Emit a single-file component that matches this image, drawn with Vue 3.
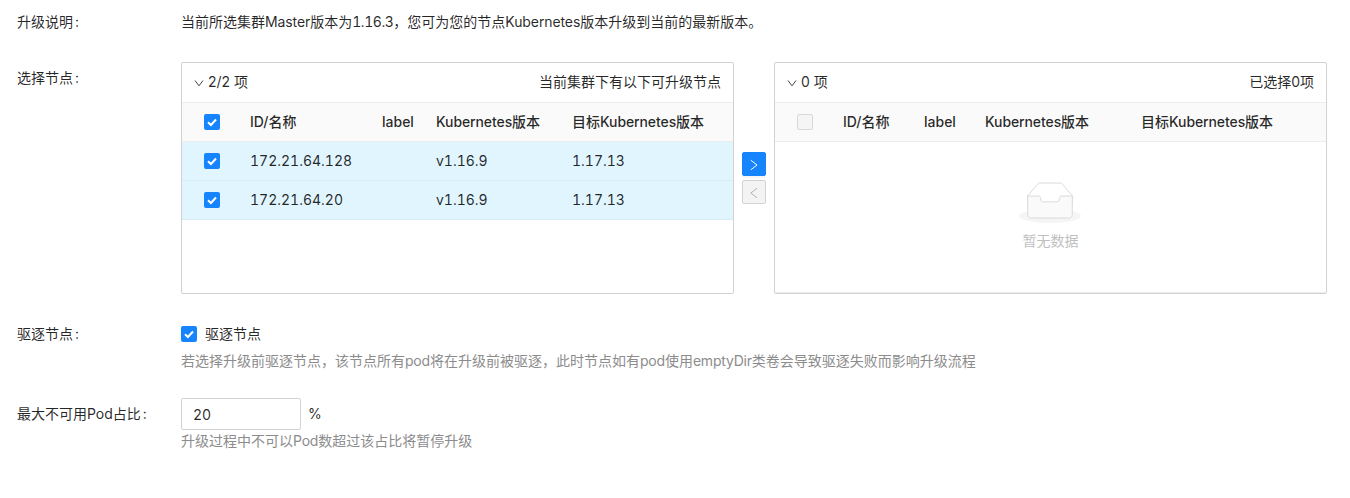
<script setup>
import { ref } from 'vue'

const columns = [
  { pre: 'ID/名称', latin: '', post: '' },
  { pre: 'label', latin: '', post: '' },
  { pre: '', latin: 'Kubernetes', post: '版本' },
  { pre: '目标', latin: 'Kubernetes', post: '版本' },
]
const nodes = [
  { id: '172.21.64.128', version: 'v1.16.9', target: '1.17.13' },
  { id: '172.21.64.20', version: 'v1.16.9', target: '1.17.13' },
]
const percent = ref('20')
</script>

<template>
  <main class="form">
    <section class="row intro">
      <div class="label">升级说明<i>:</i></div>
      <div class="desc">当前所选集群<span class="latin">Master</span>版本为<span class="num">1.16.3</span>，您可为您的节点<span class="latin">Kubernetes</span>版本升级到当前的最新版本。</div>
    </section>

    <section class="row pick">
      <div class="label">选择节点<i>:</i></div>
      <div class="transfer">
        <div class="panel">
          <header>
            <svg class="chev" viewBox="0 0 10 10"><path d="M1 2.5 5 7.8 9 2.5" /></svg>
            <span class="count">2/2 项</span>
            <span class="title">当前集群下有以下可升级节点</span>
          </header>
          <div class="line left head">
            <span class="cell center"><span class="box on"><svg viewBox="0 0 16 16"><path d="M4 8.2 6.9 11 12 5.5" /></svg></span></span>
            <span v-for="(c, i) in columns" :key="i" class="cell">{{ c.pre }}<span class="latin">{{ c.latin }}</span>{{ c.post }}</span>
          </div>
          <div v-for="n in nodes" :key="n.id" class="line left data">
            <span class="cell center"><span class="box on"><svg viewBox="0 0 16 16"><path d="M4 8.2 6.9 11 12 5.5" /></svg></span></span>
            <span class="cell">{{ n.id }}</span>
            <span class="cell"></span>
            <span class="cell">{{ n.version }}</span>
            <span class="cell">{{ n.target }}</span>
          </div>
        </div>

        <div class="ops">
          <button class="op primary"><svg viewBox="0 0 12 12"><path d="M2.8 1.2 9 6 2.8 10.8" /></svg></button>
          <button class="op" disabled><svg viewBox="0 0 12 12"><path d="M9 1.2 2.8 6 9 10.8" /></svg></button>
        </div>

        <div class="panel">
          <header>
            <svg class="chev" viewBox="0 0 10 10"><path d="M1 2.5 5 7.8 9 2.5" /></svg>
            <span class="count">0 项</span>
            <span class="title">已选择0项</span>
          </header>
          <div class="line right head">
            <span class="cell center"><span class="box off"></span></span>
            <span v-for="(c, i) in columns" :key="i" class="cell">{{ c.pre }}<span class="latin">{{ c.latin }}</span>{{ c.post }}</span>
          </div>
          <div class="empty">
            <svg width="62" height="41" viewBox="0 0 64 41" preserveAspectRatio="none">
              <g transform="translate(0 1)" fill="none" fill-rule="evenodd">
                <ellipse fill="#f5f5f5" cx="32" cy="33" rx="32" ry="7" />
                <g fill-rule="nonzero" stroke="#d9d9d9">
                  <path d="M55 12.76L44.854 1.258C44.367.474 43.656 0 42.907 0H21.093c-.749 0-1.46.474-1.947 1.257L9 12.761V22h46v-9.24z" />
                  <path d="M41.613 15.931c0-1.605.994-2.93 2.227-2.931H55v18.137C55 33.26 53.68 35 52.05 35h-40.1C10.32 35 9 33.259 9 31.137V13h11.16c1.233 0 2.227 1.323 2.227 2.928v.022c0 1.605 1.005 2.901 2.237 2.901h14.752c1.232 0 2.237-1.308 2.237-2.913v-.007z" fill="#fafafa" />
                </g>
              </g>
            </svg>
            <p>暂无数据</p>
          </div>
        </div>
      </div>
    </section>

    <section class="row evict">
      <div class="label">驱逐节点<i>:</i></div>
      <div>
        <div class="check">
          <span class="box on"><svg viewBox="0 0 16 16"><path d="M4 8.2 6.9 11 12 5.5" /></svg></span>
          <span class="text">驱逐节点</span>
        </div>
        <p class="hint">若选择升级前驱逐节点，该节点所有<span class="word">pod</span>将在升级前被驱逐，此时节点如有<span class="word">pod</span>使用<span class="word">emptyDir</span>类卷会导致驱逐失败而影响升级流程</p>
      </div>
    </section>

    <section class="row limit">
      <div class="label">最大不可用Pod占比<i>:</i></div>
      <div>
        <div class="amount"><input v-model="percent" type="text" /><span class="unit">%</span></div>
        <p class="hint">升级过程中不可以<span class="word">Pod</span>数超过该占比将暂停升级</p>
      </div>
    </section>
  </main>
</template>

<style>
body { background: #fff; }
</style>

<style scoped>
.form {
  box-sizing: border-box;
  width: 1350px;
  height: 498px;
  padding: 2px 23px 0 17px;
  overflow: hidden;
  font-family: Inter, "Noto Sans CJK SC", sans-serif;
  font-size: 14px;
  color: rgba(0, 0, 0, 0.85);
  white-space: nowrap;
}
.form * { box-sizing: border-box; }
.latin { letter-spacing: -0.1px; }
.word { letter-spacing: -0.2px; }
.num { font-variant-numeric: tabular-nums; letter-spacing: -0.45px; }
.row { display: grid; grid-template-columns: 164px 1fr; align-items: start; }
.intro { height: 56px; }
.pick { height: 256px; }
.evict { height: 80px; }
.label, .desc { line-height: 40px; }
.label i { font-style: normal; margin-left: 2px; }
.transfer { display: flex; padding-top: 4px; }
.panel { width: 553px; height: 232px; border: 1px solid #d2d2d2; border-radius: 2px; }
.panel header { display: flex; align-items: center; height: 40px; padding: 0 12px; border-bottom: 1px solid #ececec; line-height: 38px; }
.chev { width: 10px; height: 10px; margin-right: 4px; fill: none; stroke: #444; stroke-width: 1; }
.count, .title { height: 39px; }
.title { margin-left: auto; }
.line { display: grid; height: 39px; border-bottom: 1px solid #ececec; }
.left { grid-template-columns: 60px 132px 54px 136px 1fr; }
.right { grid-template-columns: 60px 81px 61px 156px 1fr; }
.cell { padding: 0 8px; line-height: 38px; }
.center { display: flex; align-items: center; justify-content: center; }
.head { background: #fafafa; font-weight: 500; }
.data { background: #e1f5ff; border-color: #d5ecf5; font-variant-numeric: tabular-nums; }
.box { display: block; flex: none; width: 16px; height: 16px; border-radius: 2px; }
.on { background: #1684fc; }
.on svg { display: block; width: 16px; height: 16px; fill: none; stroke: #fff; stroke-width: 2; }
.off { background: #f5f5f5; border: 1px solid #d9d9d9; }
.ops { display: flex; flex-direction: column; gap: 4px; width: 40px; padding: 90px 8px 0; }
.op { display: flex; align-items: center; justify-content: center; width: 24px; height: 24px; padding: 1px 0 0; border: 1px solid #d3d3d3; border-radius: 2px; background: #f3f3f3; color: #b5b5b5; }
.op svg { width: 12px; height: 12px; fill: none; stroke: currentColor; stroke-width: 1; }
.primary { border-color: #1684fc; background: #1684fc; color: #fff; box-shadow: 0 2px 0 rgba(0, 0, 0, 0.04); }
.empty { display: flex; flex-direction: column; align-items: center; height: 151px; padding-top: 39px; border-bottom: 1px solid #ececec; color: #bfbfbf; }
.empty svg { margin: 0.5px 1.5px 0 0; }
.empty p { margin: 7.5px 0 0; line-height: 22px; }
.check { display: flex; align-items: center; gap: 8px; height: 40px; line-height: 40px; }
.hint { margin: 0; line-height: 22px; color: #8c8c8c; }
.evict .hint { margin-top: -4px; }
.amount { display: flex; align-items: center; height: 32px; margin-top: 4px; gap: 7px; }
.unit { padding-bottom: 1px; }
.amount input { width: 120px; height: 32px; padding: 0 11px; border: 1px solid #d3d3d3; border-radius: 2px; outline: 0; background: #fff; color: inherit; font: inherit; font-variant-numeric: tabular-nums; }
</style>
